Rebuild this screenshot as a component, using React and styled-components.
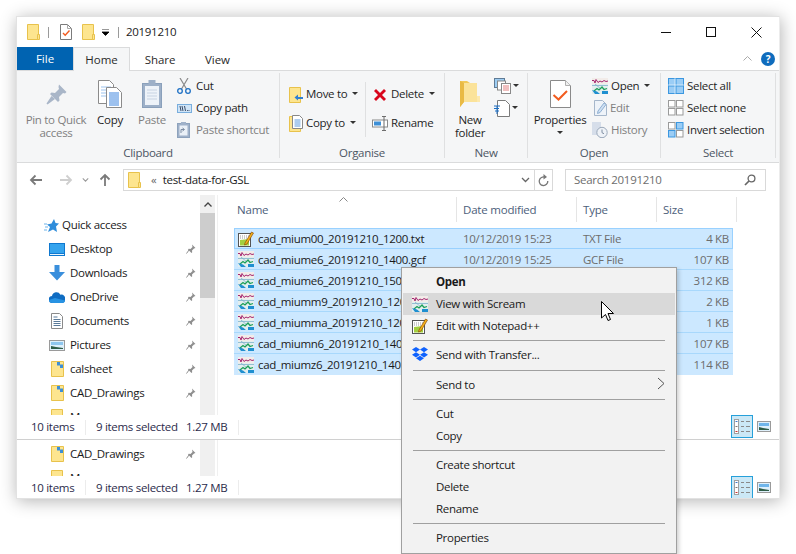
import React from "react";
import styled, { createGlobalStyle, css } from "styled-components";

const Global = createGlobalStyle`
  html, body { margin: 0; padding: 0; background: #fff; }
  body { font-family: "Open Sans", "Liberation Sans", sans-serif; font-size: 11.5px; letter-spacing: -0.3px; color: #1a1a1a; }
  * { box-sizing: border-box; }
`;

/* Open Sans sits 1px lower than the original UI font: lift the text, keep the icons in place */
const liftText = css`
  padding-bottom: 2px;
  > svg { margin-top: 2px; }
`;

const Page = styled.div`position: relative; width: 796px; height: 554px; padding: 16px; overflow: hidden;`;
const Window = styled.div`
  width: 764px; height: 483px; background: #fff; border: 1px solid #e2e2e2; border-right-color: #ececec;
  box-shadow: 1px 2px 16px rgba(0,0,0,.3);
  display: flex; flex-direction: column; overflow: hidden;
`;
const TitleBar = styled.div`height: 30px; display: flex; align-items: center; flex: none;`;
const Qat = styled.div`display: flex; align-items: center; padding-left: 10px;`;
const QatSep = styled.div`width: 1px; height: 11px; background: #9a9a9a; margin: ${p => p.$m || "0"};`;
const Gap = styled.span`width: ${p => p.$w}px; flex: none;`;
const Title = styled.div`color: #1a1a1a; margin: 0 0 2px 7px;`;
const Controls = styled.div`margin-left: auto; display: flex; align-items: center; padding-right: 17px; gap: 35px;`;

const TabRow = styled.div`height: 24px; flex: none; display: flex; border-bottom: 1px solid #dadbdc; position: relative;`;
const FileTab = styled.div`width: 56px; height: 23px; background: #0063b1; color: #fff; display: flex; align-items: center; justify-content: center; letter-spacing: 0;`;
const Tab = styled.div`
  width: ${p => p.$w}px; height: 24px; display: flex; align-items: center; justify-content: center; padding-bottom: 1px; letter-spacing: -.05px; color: #2a2a2a;
  background: ${p => p.$active ? "#f5f6f7" : "transparent"};
  border: 1px solid ${p => p.$active ? "#dadbdc" : "transparent"}; border-bottom: 0;
`;
const TabRight = styled.div`margin-left: auto; display: flex; align-items: center; gap: 9px; padding: 0 4px 0 0;`;

const Ribbon = styled.div`height: 92px; flex: none; background: #f5f6f7; border-bottom: 1px solid #dadbdc; display: flex; padding-top: 2px; align-items: flex-start;`;
const Group = styled.div`width: ${p => p.$w}px; height: 85px; border-right: 1px solid #dfe0e1; display: flex; flex-direction: column; flex: none;`;
const GroupBody = styled.div`height: 74px; display: flex; padding-top: 2px; padding-left: ${p => p.$pl || 0}px;`;
const GroupLabel = styled.div`height: 11px; line-height: 12px; text-align: center; color: #4c5563;`;
const LargeButton = styled.div`
  width: ${p => p.$w}px; display: flex; flex-direction: column; align-items: center; padding-top: 5px; flex: none;
  color: ${p => p.$off ? "#7f7f7f" : "#1f1f1f"}; text-align: center; line-height: 13px;
  svg { flex: none; margin-bottom: 5px; }
`;
const Stack = styled.div`display: flex; flex-direction: column; width: ${p => p.$w ? `${p.$w}px` : "auto"}; padding-top: ${p => p.$pt || 0}px; flex: none;`;
const SmallButton = styled.div`
  height: ${p => p.$h || 22}px; display: flex; align-items: center; gap: ${p => p.$gap || 3}px; white-space: nowrap;
  margin-left: ${p => p.$ml || 0}px;
  color: ${p => p.$off ? "#7f7f7f" : "#1f1f1f"};
  ${liftText}
`;
const Caret = styled.span`
  display: inline-block; width: 0; height: 0; margin-left: ${p => p.$ml ?? 2}px; margin-top: ${p => p.$mt || 0}px;
  border-left: 3px solid transparent; border-right: 3px solid transparent; border-top: 3px solid #333;
`;
const VSep = styled.div`width: 1px; height: 55px; background: #dfe0e1; margin: 7px 7px 0 0; flex: none;`;

const NavBar = styled.div`height: 32px; flex: none; display: flex; align-items: flex-start; padding-top: 6px; position: relative;`;
const NavButtons = styled.div`width: 106px; height: 22px; display: flex; align-items: center; padding-left: 12px; flex: none;`;
const Address = styled.div`width: 430px; height: 22px; border: 1px solid #d9d9d9; display: flex; align-items: center; padding-left: 4px; flex: none;`;
const Crumb = styled.span`color: #666; margin: 0 6px 2px 10px; letter-spacing: 0;`;
const FieldText = styled.span`margin-bottom: 2px;`;
const AddressRight = styled.div`margin-left: auto; display: flex; align-items: center; height: 100%;`;
const AddressDivider = styled.div`width: 1px; height: 100%; background: #d9d9d9; margin: 0 3px 0 4px;`;
const Search = styled.div`width: 201px; height: 22px; margin-left: 12px; border: 1px solid #d9d9d9; display: flex; align-items: center; justify-content: space-between; padding: 0 9px 0 8px; color: #6d6d6d; flex: none;`;

const Main = styled.div`height: ${p => p.$h}px; display: flex; flex: none; overflow: hidden;`;
const NavPane = styled.div`width: 183px; padding-top: ${p => p.$pt}px; flex: none; overflow: hidden;`;
const NavRow = styled.div`
  height: 24px; display: flex; align-items: center; padding: 0 4px 2px ${p => p.$top ? 27 : 32}px; gap: ${p => p.$top ? 3 : 5}px; color: #1a1a1a; white-space: nowrap;
  > svg, > span { margin-top: 2px; }
`;
const NavIcon = styled.span`width: 16px; display: flex; justify-content: center; flex: none;`;
const PinSlot = styled.span`margin-left: auto; display: flex;`;
const Scrollbar = styled.div`width: 15px; flex: none; background: #f0f0f0; display: flex; flex-direction: column;`;
const ScrollUp = styled.div`height: 18px; display: flex; align-items: center; justify-content: center; flex: none;`;
const ScrollThumb = styled.div`height: 85px; background: #cdcdcd; flex: none;`;
const PaneRule = styled.div`width: 1px; background: #f0f0f0; margin-left: 2px; flex: none;`;
const FilePane = styled.div`flex: 1; display: flex; flex-direction: column; position: relative; min-width: 0;`;
const Header = styled.div`display: flex; margin: 2px 0 0 13px; height: 25px; flex: none; position: relative;`;
const HeadCell = styled.div`width: ${p => p.$w}px; border-right: 1px solid #e5e5e5; padding: 0 6px; display: flex; align-items: center; color: #4c607a; letter-spacing: -.2px; flex: none;`;
const SortMark = styled.svg`position: absolute; left: 108px; top: 0; width: 9px; height: 5px;`;
const Rows = styled.div`margin: 6px 0 0 16px; width: 499px; display: flex; flex-direction: column;`;
const Row = styled.div`
  height: 21px; display: grid; grid-template-columns: 225px 120px 80px 66px; padding-left: 4px; align-items: center;
  background: #cce8ff; color: #6d6d6d; white-space: nowrap; border-bottom: 1px solid #a8d8fc;
  ${p => p.$focus && "border: 1px solid #99d1ff; padding-left: 3px;"}
  ${p => p.$last && "border-bottom: 0;"}
`;
const NameCell = styled.div`display: flex; align-items: center; gap: 4px; color: #1a1a1a; overflow: hidden;`;
const SizeCell = styled.div`text-align: right;`;

const Status = styled.div`height: ${p => p.$h}px; flex: none; display: flex; align-items: center; padding-left: 14px; position: relative; ${p => p.$rule && "border-bottom: 1px solid #d0d0d0;"}`;
const StatusText = styled.span`width: ${p => p.$w}px; flex: none; color: #2b2b4b; margin-bottom: ${p => p.$lift ? 2 : 0}px;`;
const StatusSep = styled.span`width: 1px; height: 15px; background: #ececec; flex: none; margin-right: ${p => p.$mr}px;`;
const ViewToggles = styled.div`margin-left: auto; margin-right: 8px; display: flex; align-items: center; gap: 4px; align-self: flex-start;`;
const ToggleOn = styled.div`width: 22px; height: 23px; border: 1px solid #26a0da; background: #cbe8f6; display: flex; align-items: center; justify-content: center;`;

const Menu = styled.div`
  position: absolute; left: 401px; top: 267px; width: 276px; height: 287px; background: #f2f2f2; border: 1px solid #a0a0a0;
  padding: 3px 1px; box-shadow: 2px 2px 4px rgba(0,0,0,.18); color: #1a1a1a;
`;
const MenuItem = styled.div`
  height: 22px; display: flex; align-items: center; padding: 0 0 2px 33px; position: relative;
  font-weight: ${p => p.$bold ? 700 : 400}; background: ${p => p.$hover ? "#d9d9d9" : "transparent"};
  svg { position: absolute; left: 9px; top: 3px; }
`;
const MenuSep = styled.div`height: 1px; background: #a0a0a0; margin: ${p => p.$t ?? 3}px 10px 3px;`;
const SubArrow = styled.svg`position: absolute; right: 10px; top: 5px; left: auto !important;`;
const Pointer = styled.svg`position: absolute; left: 601px; top: 301px;`;

const Folder = ({ w = 13, h = 16 }) => (
  <svg width={w} height={h} viewBox="0 0 13 16">
    <path d="M.5.5h11v15H.5z" fill="#fde58f" stroke="#e8c24c" />
    <path d="M10.500 10.500h2v5h-2z" fill="#fde58f" stroke="#e8c24c" />
  </svg>
);
const PinnedFolder = () => (
  <svg width="13" height="16" viewBox="0 0 13 16">
    <path d="M.5.5h12v15H.5z" fill="#fde58f" stroke="#e8c24c" />
    <path d="M6 1h3v2.500h3V7H9V4.500H6z" fill="#3d8fd6" />
  </svg>
);
const CheckDoc = () => (
  <svg width="12" height="16" viewBox="0 0 12 16">
    <path d="M.5.5h7l4 4v11H.5z" fill="#fff" stroke="#7b7b7b" />
    <path d="M7.500.5v4h4" fill="none" stroke="#a8a8a8" />
    <path d="M3 9l2.200 2.200L9.500 6.500" fill="none" stroke="#f25c1f" strokeWidth="1.400" />
  </svg>
);
const BigCheckDoc = () => (
  <svg width="21" height="28" viewBox="0 0 21 28">
    <path d="M.5.5h15l5 5v22H.5z" fill="#fff" stroke="#8a8a8a" />
    <path d="M15.500.5v5h5" fill="#f0f0f0" stroke="#b0b0b0" />
    <path d="M3.500 15l5 4.500 8.500-8.500" fill="none" stroke="#f25c1f" strokeWidth="2" />
  </svg>
);
const Pin = () => (
  <svg width="21" height="28" viewBox="0 -4 21 28">
    <path d="M13 .5l7.500 7.500-1.500 1.500-2-.5-4 4 .5 3.500-1.500 1.500-8-8 1.500-1.500 3.500.5 4-4-.5-2z" fill="#a9b6c8" />
    <path d="M5.500 12L.5 19.500l1 1L9 15z" fill="#a9b6c8" />
  </svg>
);
const BigCopy = () => (
  <svg width="24" height="28" viewBox="0 0 24 28">
    <path d="M.5.5h11l4 4v19H.5z" fill="#fff" stroke="#8b8b8b" />
    <path d="M3 7h10M3 10h10M3 13h10M3 16h5" stroke="#9cc3ee" />
    <path d="M8.500 7.500h10l5 5v15h-15z" fill="#fff" stroke="#8b8b8b" />
    <path d="M11 13h10M11 15h10M11 17h10M11 19h10M11 21h10M11 23h10M11 25h10" stroke="#3a83de" />
  </svg>
);
const BigPaste = () => (
  <svg width="20" height="28" viewBox="0 0 20 28">
    <rect x=".5" y="3.500" width="19" height="24" fill="#9db0c8" stroke="#8aa0bb" />
    <rect x="3" y="6" width="14" height="19" fill="#eef3f9" />
    <path d="M5 10h10M5 13h10M5 16h10M5 19h10" stroke="#c7d3e2" />
    <rect x="6.500" y="0" width="7" height="5" fill="#9db0c8" />
  </svg>
);
const Scissors = () => (
  <svg width="14" height="16" viewBox="0 0 14 16">
    <path d="M3 0l6.500 11M11 0L4.500 11" stroke="#8a8a8a" strokeWidth="1.200" fill="none" />
    <circle cx="3" cy="13" r="2.300" fill="none" stroke="#1c6fc4" strokeWidth="1.300" />
    <circle cx="11" cy="13" r="2.300" fill="none" stroke="#1c6fc4" strokeWidth="1.300" />
  </svg>
);
const CopyPath = () => (
  <svg width="15" height="9" viewBox="0 0 15 9">
    <rect x=".5" y=".5" width="14" height="8" fill="#cfe4f7" stroke="#79aedd" />
    <path d="M3 2l1 5M5 2l1 5M7.500 2l1 5" stroke="#2a3a55" strokeWidth=".9" />
    <path d="M10 6.500h.8M11.600 6.500h.8" stroke="#2a3a55" />
  </svg>
);
const PasteShortcut = () => (
  <svg width="13" height="16" viewBox="0 0 13 16">
    <rect x=".5" y="1.500" width="12" height="14" fill="#9fb1c9" stroke="#8da2bc" />
    <rect x="2.500" y="3.500" width="8" height="10" fill="#eaf0f7" />
    <path d="M4 11V7.500h3M5.500 6l2 1.500-2 1.500" stroke="#7b8ba1" fill="none" />
    <rect x="4" y="0" width="5" height="3" fill="#9fb1c9" />
  </svg>
);
const MoveTo = () => (
  <svg width="14" height="16" viewBox="0 0 14 16">
    <path d="M.5.5h11v15H.5z" fill="#fde58f" stroke="#e8c24c" />
    <path d="M14 10H9V7.500L5.500 10.500 9 13.500V12h5z" fill="#2f7fd3" />
  </svg>
);
const CopyTo = () => (
  <svg width="14" height="17" viewBox="0 0 14 17">
    <path d="M.5 1.500h11v15H.5z" fill="#fde58f" stroke="#e8c24c" />
    <path d="M3.500.5h7l3 3v10h-10z" fill="#fff" stroke="#888" />
    <path d="M5.500 5h6M5.500 7h6M5.500 9h6M5.500 11h6" stroke="#5a9ae0" />
  </svg>
);
const RedX = () => (
  <svg width="14" height="14" viewBox="0 0 14 14">
    <path d="M1 3l2-2 4 4 4-4 2 2-4 4 4 4-2 2-4-4-4 4-2-2 4-4z" fill="#d8051b" />
  </svg>
);
const RenameIcon = () => (
  <svg width="16" height="15" viewBox="0 0 16 15">
    <rect x=".5" y="4" width="15" height="7" fill="#fff" stroke="#8a8a8a" />
    <rect x="2" y="5.500" width="7" height="4" fill="#3d8fd6" />
    <path d="M10 .5h4M12 .5v14M10 14.500h4" stroke="#6d6d6d" fill="none" />
  </svg>
);
const NewFolder = () => (
  <svg width="20" height="28" viewBox="0 0 20 28">
    <path d="M0 1h7l3 2h7v19H4l-4 5z" fill="#f2c95a" />
    <path d="M4 3h13v19H4z" fill="#fbe39a" />
    <path d="M0 1v26l4-5V3z" fill="#e9ba45" />
    <path d="M17 16h3v6h-3z" fill="#fde9ae" />
  </svg>
);
const NewItem = () => (
  <svg width="17" height="16" viewBox="0 0 17 16">
    <rect x=".5" y=".5" width="10" height="9" fill="#9dcdf3" stroke="#5f7b96" />
    <rect x="3.500" y="3" width="8" height="9" fill="#fff" stroke="#888" />
    <rect x="7.500" y="5.500" width="9" height="10" fill="#fff" stroke="#888" />
    <path d="M9 8h6M9 10h6M9 12h6" stroke="#e28080" />
  </svg>
);
const EasyAccess = () => (
  <svg width="16" height="17" viewBox="0 0 16 17">
    <path d="M3.500.5h8l4 4v12h-12z" fill="#fff" stroke="#7b7b7b" />
    <path d="M0 6h6M0 8.500h5M1 11h4M3 6v8" stroke="#1c6fc4" />
  </svg>
);
const Scream = () => (
  <svg width="16" height="16" viewBox="0 0 16 16">
    <rect x="0" y="0" width="16" height="16" fill="#e3eeee" />
    <rect x="0" y="0" width="16" height="6" fill="#f2ece9" />
    <path d="M0 2.500h2l1 2.500 1-3.500 2 3 2-1.500 2 1 2-1.500 2 1 2-.5" stroke="#a5266f" fill="none" strokeWidth="1" />
    <path d="M3 6l6 5M0 7.500h16" stroke="#7fb2cc" strokeWidth=".8" />
    <path d="M2 13l3-2.500 2 1.500 3-3 2 2.500 3-1" stroke="#1c9f58" fill="none" strokeWidth="1.300" />
    <path d="M0 12l3 4h5l-3-2.500zM10 13h6v3h-6z" fill="#1f8fd0" />
  </svg>
);
const EditIcon = () => (
  <svg width="14" height="16" viewBox="0 0 14 16">
    <path d="M.5.5h8l4 4v11H.5z" fill="#eef3f9" stroke="#a6b7cb" />
    <path d="M4 11l6-8 2 1.500-6 8-2.500 1z" fill="#cfe0f2" stroke="#8fb0d3" />
  </svg>
);
const HistoryIcon = () => (
  <svg width="16" height="16" viewBox="0 0 16 16">
    <rect x="0" y="0" width="9" height="13" fill="#d6deea" />
    <circle cx="10" cy="10.500" r="5.200" fill="#eef2f7" stroke="#9aa8ba" />
    <path d="M10 7.500v3.200l2 1" stroke="#7f8ea2" fill="none" />
  </svg>
);
const SelectIcon = ({ on }) => {
  const cells = [[1, 1], [9, 1], [1, 9], [9, 9]];
  return (
    <svg width="16" height="16" viewBox="0 0 16 16">
      {cells.map(([x, y], i) => (
        <rect key={i} x={x - .5} y={y - .5} width="6.500" height="6.500" fill={on[i] ? "#9bcdf5" : "#fff"} stroke={on[i] ? "#3b97e0" : "#9a9a9a"} />
      ))}
    </svg>
  );
};
const SelectAll = () => (
  <svg width="16" height="16" viewBox="0 0 16 16">
    <rect x=".5" y=".5" width="15" height="15" fill="#9bcdf5" stroke="#3b97e0" />
    <path d="M8 0v16M0 8h16" stroke="#3b97e0" />
    <path d="M7 0v16M0 7h16" stroke="#fff" strokeWidth=".6" />
  </svg>
);
const Arrow = ({ d, c = "#7a7a7a" }) => (
  <svg width="14" height="12" viewBox="0 0 14 12" style={{ transform: `rotate(${d}deg)`, flex: "none" }}>
    <path d="M13 6H2M6.500 1.500L2 6l4.500 4.500" fill="none" stroke={c} strokeWidth="1.800" />
  </svg>
);
const Chevron = ({ c = "#666", w = 9 }) => (
  <svg width={w} height="6" viewBox="0 0 9 6"><path d="M1 1l3.500 3.500L8 1" fill="none" stroke={c} strokeWidth="1.300" /></svg>
);
const Refresh = () => (
  <svg width="11" height="13" viewBox="0 0 11 13">
    <path d="M7 3.200A4.300 4.300 0 1 0 9.800 7" fill="none" stroke="#777" strokeWidth="1.300" />
    <path d="M5.500 0l3.500 3-3.500 2.500z" fill="#777" />
  </svg>
);
const Magnifier = () => (
  <svg width="12" height="12" viewBox="0 0 12 12">
    <circle cx="7.500" cy="4.500" r="3.400" fill="none" stroke="#666" strokeWidth="1.300" />
    <path d="M5 7L1 11" stroke="#666" strokeWidth="1.700" />
  </svg>
);
const QuickStar = () => (
  <svg width="15" height="13" viewBox="0 0 15 13">
    <path d="M10 0l1.500 4 3.500.5-3 3 1 5.500-4-2.500L4 13l2-5-3-2.500 4.500-1z" fill="#2f8ddb" />
    <path d="M0 5h3M1 8h3M0 11h3" stroke="#6db3ea" />
  </svg>
);
const Desktop = () => (
  <svg width="16" height="13" viewBox="0 0 16 13">
    <rect x="0" y="0" width="16" height="13" fill="#0f78cf" />
    <rect x="1" y="1" width="14" height="9" fill="#35a4ee" />
    <path d="M1 11.500h14" stroke="#e8f5fd" />
  </svg>
);
const Download = () => (
  <svg width="16" height="16" viewBox="0 0 16 16">
    <path d="M5.500 0h5v7H16L8 15.500 0 7h5.500z" fill="#3a8fdc" />
  </svg>
);
const Cloud = () => (
  <svg width="16" height="11" viewBox="0 0 16 11">
    <path d="M3.500 11A3.500 3.500 0 0 1 3 4a4.500 4.500 0 0 1 8.400-1.300A4 4 0 0 1 16 8c0 1.500-1 3-3 3z" fill="#0f6cc2" />
    <path d="M3.500 11C2 11 0 10 0 8l6-2 10 2.500c0 1.500-1 2.500-3 2.500z" fill="#2893e3" />
  </svg>
);
const Docs = () => (
  <svg width="12" height="16" viewBox="0 0 12 16">
    <path d="M.5.5h8l3 3v12H.5z" fill="#fff" stroke="#8a8a8a" />
    <path d="M2.500 4h4M2.500 6.500h7M2.500 8.500h7M2.500 10.500h7M2.500 12.500h7" stroke="#5a7a99" />
  </svg>
);
const Pictures = () => (
  <svg width="16" height="11" viewBox="0 0 16 11">
    <rect x=".5" y=".5" width="15" height="10" fill="#dff0fb" stroke="#9a9a9a" />
    <rect x="2" y="2" width="12" height="3" fill="#8ec6ee" />
    <path d="M2 9V6l5 1 7 1v1z" fill="#2e5c47" />
  </svg>
);
const SmallPin = () => (
  <svg width="10" height="10" viewBox="0 0 10 10">
    <path d="M6 .5l3.500 3.500-1.500.5-2 2 .2 1.800-.7.7-3.500-3.500.7-.7 1.800.2 2-2z" fill="#8f8f8f" />
    <path d="M3 6L.5 9.500" stroke="#8f8f8f" />
  </svg>
);
const NotepadIcon = () => (
  <svg width="16" height="16" viewBox="0 0 16 16">
    <rect x=".5" y="2.500" width="12" height="13" fill="#fff" stroke="#555" />
    <path d="M2 9l9-1v6.500H2z" fill="#a3cf3f" />
    <path d="M2 5h9M2 7h7" stroke="#999" strokeDasharray="1 1" />
    <path d="M7 12l6.500-11 2 1-6.500 11-2.500 1z" fill="#f4b21a" stroke="#7a3a00" strokeWidth=".6" />
  </svg>
);
const Dropbox = () => (
  <svg width="16" height="15" viewBox="0 0 16 15">
    <path d="M4 0l4 2.600L4 5.200 0 2.600zM12 0l4 2.600-4 2.600-4-2.600zM0 7.800l4-2.600 4 2.600-4 2.600zM16 7.800l-4-2.600-4 2.600 4 2.600zM4 11.300l4-2.600 4 2.600-4 2.700z" fill="#0f62fe" />
  </svg>
);
const Details = () => (
  <svg width="16" height="15" viewBox="0 0 16 15">
    <rect x=".5" y=".5" width="4" height="14" fill="#fff" stroke="#a0a0a0" />
    <path d="M1.500 2.500h2" stroke="#3a78c9" />
    <path d="M1.500 7.500h2" stroke="#777" />
    <path d="M1.500 12.500h2" stroke="#c9302c" />
    <path d="M7 2.500h3M12 2.500h4M7 7.500h3M12 7.500h4M7 12.500h3M12 12.500h4" stroke="#8a8a8a" />
  </svg>
);
const Thumbs = () => (
  <svg width="14" height="11" viewBox="0 0 14 11">
    <rect x=".5" y=".5" width="13" height="10" fill="#dff0fb" stroke="#9a9a9a" />
    <rect x="2" y="2" width="10" height="3" fill="#6fb5ea" />
    <path d="M2 9V6l4 1 6 1v1z" fill="#2e5c47" />
  </svg>
);

const navItems = [
  [<Desktop />, "Desktop"], [<Download />, "Downloads"], [<Cloud />, "OneDrive"], [<Docs />, "Documents"],
  [<Pictures />, "Pictures"], [<PinnedFolder />, "calsheet"], [<PinnedFolder />, "CAD_Drawings"],
];
const files = [
  ["cad_mium00_20191210_1200.txt", "10/12/2019 15:23", "TXT File", "4 KB"],
  ["cad_miume6_20191210_1400.gcf", "10/12/2019 15:25", "GCF File", "107 KB"],
  ["cad_miume6_20191210_1500.gcf", "10/12/2019 15:25", "GCF File", "312 KB"],
  ["cad_miumm9_20191210_1200.gcf", "10/12/2019 15:25", "GCF File", "2 KB"],
  ["cad_miumma_20191210_1200.gcf", "10/12/2019 15:25", "GCF File", "1 KB"],
  ["cad_miumn6_20191210_1400.gcf", "10/12/2019 15:25", "GCF File", "107 KB"],
  ["cad_miumz6_20191210_1400.gcf", "10/12/2019 15:25", "GCF File", "114 KB"],
];

const StatusBar = ({ h, rule }) => (
  <Status $h={h} $rule={rule}>
    <StatusText $w={54} $lift={rule}>10 items</StatusText>
    <StatusSep $mr={10} />
    <StatusText $w={90} $lift={rule}>9 items selected</StatusText>
    <StatusText $w={52} $lift={rule}>1.27 MB</StatusText>
    <StatusSep $mr={0} />
    <ViewToggles>
      <ToggleOn><Details /></ToggleOn>
      <Thumbs />
    </ViewToggles>
  </Status>
);

export default function App() {
  return (
    <Page>
      <Global />
      <Window>
        <TitleBar>
          <Qat>
            <Folder />
            <QatSep $m="0 11px 0 8px" />
            <CheckDoc />
            <Gap $w={10} />
            <Folder />
            <svg width="8" height="7" viewBox="0 0 8 7" style={{ marginLeft: 7 }}>
              <path d="M0 0h7M0 3h7L3.500 6.500z" stroke="#000" fill="#000" strokeWidth=".8" />
            </svg>
            <QatSep $m="0 0 0 8px" />
          </Qat>
          <Title>20191210</Title>
          <Controls>
            <svg width="10" height="10" viewBox="0 0 10 10"><path d="M0 5.500h10" stroke="#111" /></svg>
            <svg width="10" height="10" viewBox="0 0 10 10"><rect x=".5" y=".5" width="9" height="9" fill="none" stroke="#111" /></svg>
            <svg width="11" height="11" viewBox="0 0 11 11"><path d="M.5.5l10 10M10.500.5l-10 10" stroke="#111" /></svg>
          </Controls>
        </TitleBar>
        <TabRow>
          <FileTab>File</FileTab>
          <Tab $w={57} $active>Home</Tab>
          <Tab $w={60}>Share</Tab>
          <Tab $w={55}>View</Tab>
          <TabRight>
            <svg width="9" height="5" viewBox="0 0 9 5"><path d="M.5 4.500l4-4 4 4" fill="none" stroke="#aaa" /></svg>
            <svg width="14" height="14" viewBox="0 0 14 14">
              <circle cx="7" cy="7" r="7" fill="#0f6cbd" />
              <text x="7" y="10.500" textAnchor="middle" fontSize="10" fontWeight="700" fill="#fff" fontFamily="Open Sans">?</text>
            </svg>
          </TabRight>
        </TabRow>
        <Ribbon>
          <Group $w={263}>
            <GroupBody $pl={2}>
              <LargeButton $w={74} $off><Pin />Pin to Quick<br />access</LargeButton>
              <LargeButton $w={34}><BigCopy />Copy</LargeButton>
              <LargeButton $w={50} $off><BigPaste />Paste</LargeButton>
              <Stack>
                <SmallButton $gap={5}><Scissors />Cut</SmallButton>
                <SmallButton $gap={4}><CopyPath />Copy path</SmallButton>
                <SmallButton $off $gap={6}><PasteShortcut />Paste shortcut</SmallButton>
              </Stack>
            </GroupBody>
            <GroupLabel>Clipboard</GroupLabel>
          </Group>
          <Group $w={165}>
            <GroupBody $pl={9}>
              <Stack $w={76} $pt={5}>
                <SmallButton $h={29}><MoveTo />Move to<Caret /></SmallButton>
                <SmallButton $h={29}><CopyTo />Copy to<Caret /></SmallButton>
              </Stack>
              <VSep />
              <Stack $pt={5}>
                <SmallButton $h={29} $gap={4}><RedX />Delete<Caret $ml={1} /></SmallButton>
                <SmallButton $h={29} $ml={-1}><RenameIcon />Rename</SmallButton>
              </Stack>
            </GroupBody>
            <GroupLabel>Organise</GroupLabel>
          </Group>
          <Group $w={83}>
            <GroupBody $pl={1}>
              <LargeButton $w={48}><NewFolder />New<br />folder</LargeButton>
              <Stack>
                <SmallButton $h={22}><NewItem /><Caret $ml={-1} /></SmallButton>
                <SmallButton $h={22}><EasyAccess /><Caret $ml={-1} /></SmallButton>
              </Stack>
            </GroupBody>
            <GroupLabel>New</GroupLabel>
          </Group>
          <Group $w={133}>
            <GroupBody>
              <LargeButton $w={64}><BigCheckDoc />Properties<Caret $ml={0} $mt={5} /></LargeButton>
              <Stack>
                <SmallButton><Scream />Open<Caret /></SmallButton>
                <SmallButton $off $gap={2} $ml={2}><EditIcon />Edit</SmallButton>
                <SmallButton $off><HistoryIcon />History</SmallButton>
              </Stack>
            </GroupBody>
            <GroupLabel>Open</GroupLabel>
          </Group>
          <Group $w={115}>
            <GroupBody $pl={7}>
              <Stack>
                <SmallButton><SelectAll />Select all</SmallButton>
                <SmallButton><SelectIcon on={[false, false, false, false]} />Select none</SmallButton>
                <SmallButton><SelectIcon on={[false, true, true, false]} />Invert selection</SmallButton>
              </Stack>
            </GroupBody>
            <GroupLabel>Select</GroupLabel>
          </Group>
        </Ribbon>
        <NavBar>
          <NavButtons>
            <Arrow d={0} />
            <Gap $w={16} />
            <Arrow d={180} c="#cfcfcf" />
            <Gap $w={9} />
            <Chevron c="#999" w={7} />
            <Gap $w={9} />
            <Arrow d={90} />
          </NavButtons>
          <Address>
            <Folder />
            <Crumb>«</Crumb>
            <FieldText>test-data-for-GSL</FieldText>
            <AddressRight>
              <Chevron />
              <AddressDivider />
              <Refresh />
              <Gap $w={3} />
            </AddressRight>
          </Address>
          <Search><FieldText>Search 20191210</FieldText><Magnifier /></Search>
        </NavBar>
        <Main $h={220}>
          <NavPane $pt={18}>
            <NavRow $top><QuickStar />Quick access</NavRow>
            {navItems.map(([icon, label]) => (
              <NavRow key={label}>
                <NavIcon>{icon}</NavIcon>
                {label}
                <PinSlot><SmallPin /></PinSlot>
              </NavRow>
            ))}
            <NavRow><NavIcon><Folder /></NavIcon>Messages</NavRow>
          </NavPane>
          <Scrollbar>
            <ScrollUp><svg width="8" height="5" viewBox="0 0 8 5"><path d="M.5 4.500L4 1l3.500 3.500" fill="none" stroke="#444" strokeWidth="1.300" /></svg></ScrollUp>
            <ScrollThumb />
          </Scrollbar>
          <PaneRule />
          <FilePane>
            <Header>
              <SortMark viewBox="0 0 9 5"><path d="M.5 4.500l4-4 4 4" fill="none" stroke="#888" /></SortMark>
              <HeadCell $w={226}>Name</HeadCell>
              <HeadCell $w={120}>Date modified</HeadCell>
              <HeadCell $w={80}>Type</HeadCell>
              <HeadCell $w={80}>Size</HeadCell>
            </Header>
            <Rows>
              {files.map((f, i) => (
                <Row key={f[0]} $focus={i === 0} $last={i === files.length - 1}>
                  <NameCell>{i === 0 ? <NotepadIcon /> : <Scream />}{f[0]}</NameCell>
                  <div>{f[1]}</div>
                  <div>{f[2]}</div>
                  <SizeCell>{f[3]}</SizeCell>
                </Row>
              ))}
            </Rows>
          </FilePane>
        </Main>
        <StatusBar h={25} rule />
        <Main $h={36}>
          <NavPane $pt={2}>
            <NavRow>
              <NavIcon><PinnedFolder /></NavIcon>
              CAD_Drawings
              <PinSlot><SmallPin /></PinSlot>
            </NavRow>
            <NavRow><NavIcon><Folder /></NavIcon>Messages</NavRow>
          </NavPane>
          <Scrollbar />
          <PaneRule />
        </Main>
        <StatusBar h={23} />
      </Window>
      <Menu>
        <MenuItem $bold>Open</MenuItem>
        <MenuItem $hover><Scream />View with Scream</MenuItem>
        <MenuItem><NotepadIcon />Edit with Notepad++</MenuItem>
        <MenuSep />
        <MenuItem><Dropbox />Send with Transfer...</MenuItem>
        <MenuSep $t={4} />
        <MenuItem>Send to<SubArrow width="8" height="13" viewBox="0 0 8 13"><path d="M1 1l6 5.500L1 12" fill="none" stroke="#555" /></SubArrow></MenuItem>
        <MenuSep />
        <MenuItem>Cut</MenuItem>
        <MenuItem>Copy</MenuItem>
        <MenuSep />
        <MenuItem>Create shortcut</MenuItem>
        <MenuItem>Delete</MenuItem>
        <MenuItem>Rename</MenuItem>
        <MenuSep />
        <MenuItem>Properties</MenuItem>
      </Menu>
      <Pointer width="13" height="21" viewBox="0 0 13 21">
        <path d="M.5.5v16.500l4-3.500 2.500 6 2.500-1-2.500-6h5.500z" fill="#fff" stroke="#000" />
      </Pointer>
    </Page>
  );
}
